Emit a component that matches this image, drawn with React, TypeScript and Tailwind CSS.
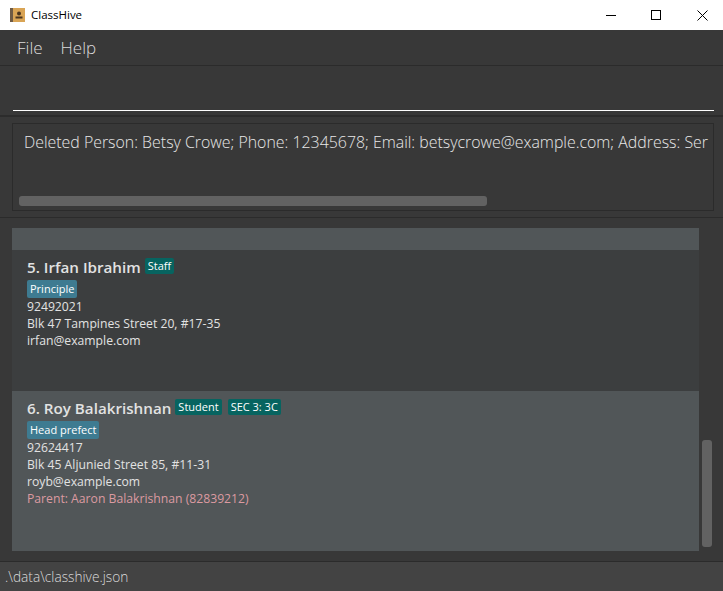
import React from 'react'

const font = { fontFamily: '"Open Sans", "Noto Sans", sans-serif' }

function Tag({ label, blue }: { label: string; blue?: boolean }) {
  return (
    <span className={`px-[3px] rounded-[2px] text-[11px] whitespace-nowrap text-white ${blue ? 'h-[18px] leading-[18px] bg-[#3e7b91]' : 'h-[16px] leading-[16px] bg-[#076460]'}`}>
      {label}
    </span>
  )
}

function PersonCard({ index, name, tags, role, phone, address, email, parent, selected }: {
  index: number
  name: string
  tags: string[]
  role: string
  phone: string
  address: string
  email: string
  parent?: string
  selected?: boolean
}) {
  return (
    <div className={`pl-[15px] pt-[7px] ${selected ? 'h-[160px] bg-[#515658]' : 'h-[141px] bg-[#3c3e3f]'}`}>
      <div className="flex items-center h-[21px]">
        <span className="text-[15.2px] font-semibold text-[#e2e2e2] mr-[4px] whitespace-nowrap">{index}. {name}</span>
        <div className="flex gap-[6px] -mt-[3px]">
          {tags.map(t => <Tag key={t} label={t} />)}
        </div>
      </div>
      <div className="flex mt-[2px]">
        <Tag label={role} blue />
      </div>
      <div className="text-[12.2px] leading-[17px] text-[#e2e2e2]">{phone}</div>
      <div className="text-[12.2px] leading-[17px] text-[#e2e2e2]">{address}</div>
      <div className="text-[12.2px] leading-[17px] text-[#e2e2e2]">{email}</div>
      {parent && <div className="text-[12.2px] leading-[17px] text-[#dc9aa1]">{parent}</div>}
    </div>
  )
}

export default function App() {
  return (
    <div className="w-[723px] h-[591px] flex flex-col overflow-hidden bg-[#383838]" style={font}>
      {/* Window title bar */}
      <div className="h-[30px] shrink-0 bg-white flex items-center">
        <svg width="15" height="14" viewBox="0 0 15 14" className="ml-[10px] mr-[6px]">
          <rect x="0" y="0" width="15" height="14" fill="#d9a455" />
          <rect x="0" y="0" width="3" height="14" fill="#6e5a45" />
          <circle cx="9" cy="5.5" r="2" fill="#4a3520" />
          <rect x="5.5" y="8.5" width="7" height="2" fill="#4a3520" />
        </svg>
        <span className="text-[11.5px] text-black">ClassHive</span>
        <div className="ml-auto flex items-center">
          <svg width="10" height="10" viewBox="0 0 10 10" className="mr-[35px]"><path d="M0 5.5h10" stroke="#000" strokeWidth="1" /></svg>
          <svg width="10" height="10" viewBox="0 0 10 10" className="mr-[36px]"><rect x="0.5" y="0.5" width="9" height="9" fill="none" stroke="#000" strokeWidth="1" /></svg>
          <svg width="11" height="11" viewBox="0 0 11 11" className="mr-[15px]"><path d="M0.5 0.5l10 10M10.5 0.5l-10 10" stroke="#000" strokeWidth="1" /></svg>
        </div>
      </div>

      {/* Menu */}
      <div className="h-[36px] shrink-0 flex items-center gap-[18px] pl-[17px] border-b border-[#2b2b2b] text-[17px] font-light text-[#dcdcdc]">
        <span>File</span>
        <span>Help</span>
      </div>

      {/* Command box */}
      <div className="h-[51px] shrink-0 px-[13px] pr-[9px] pt-[44px] border-b-2 border-[#2c2c2c]">
        <div className="h-px bg-white" />
      </div>

      {/* Result display */}
      <div className="h-[101px] shrink-0 border-b border-[#2b2b2b] pl-[12px] pr-[9px] pt-[6px]">
        <div className="h-[88px] border border-[#2b2b2b] overflow-hidden relative">
          <div className="pl-[11px] pt-[7px] text-[15.9px] font-light text-[#e8e8e8] whitespace-nowrap">
            Deleted Person: Betsy Crowe; Phone: 12345678; Email: betsycrowe@example.com; Address: Ser
          </div>
          <div className="absolute left-[6px] top-[72px] w-[468px] h-[10px] rounded-[3px] bg-[#626262]" />
        </div>
      </div>

      {/* Person list */}
      <div className="h-[343px] shrink-0 relative pl-[12px] pt-[10px]">
        <div className="w-[687px]">
          <div className="h-[22px] bg-[#515658]" />
          <PersonCard
            index={5}
            name="Irfan Ibrahim"
            tags={['Staff']}
            role="Principle"
            phone="92492021"
            address="Blk 47 Tampines Street 20, #17-35"
            email="irfan@example.com"
          />
          <PersonCard
            index={6}
            name="Roy Balakrishnan"
            tags={['Student', 'SEC 3: 3C']}
            role="Head prefect"
            phone="92624417"
            address="Blk 45 Aljunied Street 85, #11-31"
            email="royb@example.com"
            parent="Parent: Aaron Balakrishnan (82839212)"
            selected
          />
        </div>
        <div className="absolute left-[702px] top-[222px] w-[10px] h-[107px] rounded-[3px] bg-[#626262]" />
      </div>

      {/* Status bar */}
      <div className="flex-1 bg-[#434343] border-t border-[#2b2b2b] pl-[5px] pt-[1px] flex items-center text-[13.7px] font-light text-[#dcdcdc]">
        .\data\classhive.json
      </div>
    </div>
  )
}
